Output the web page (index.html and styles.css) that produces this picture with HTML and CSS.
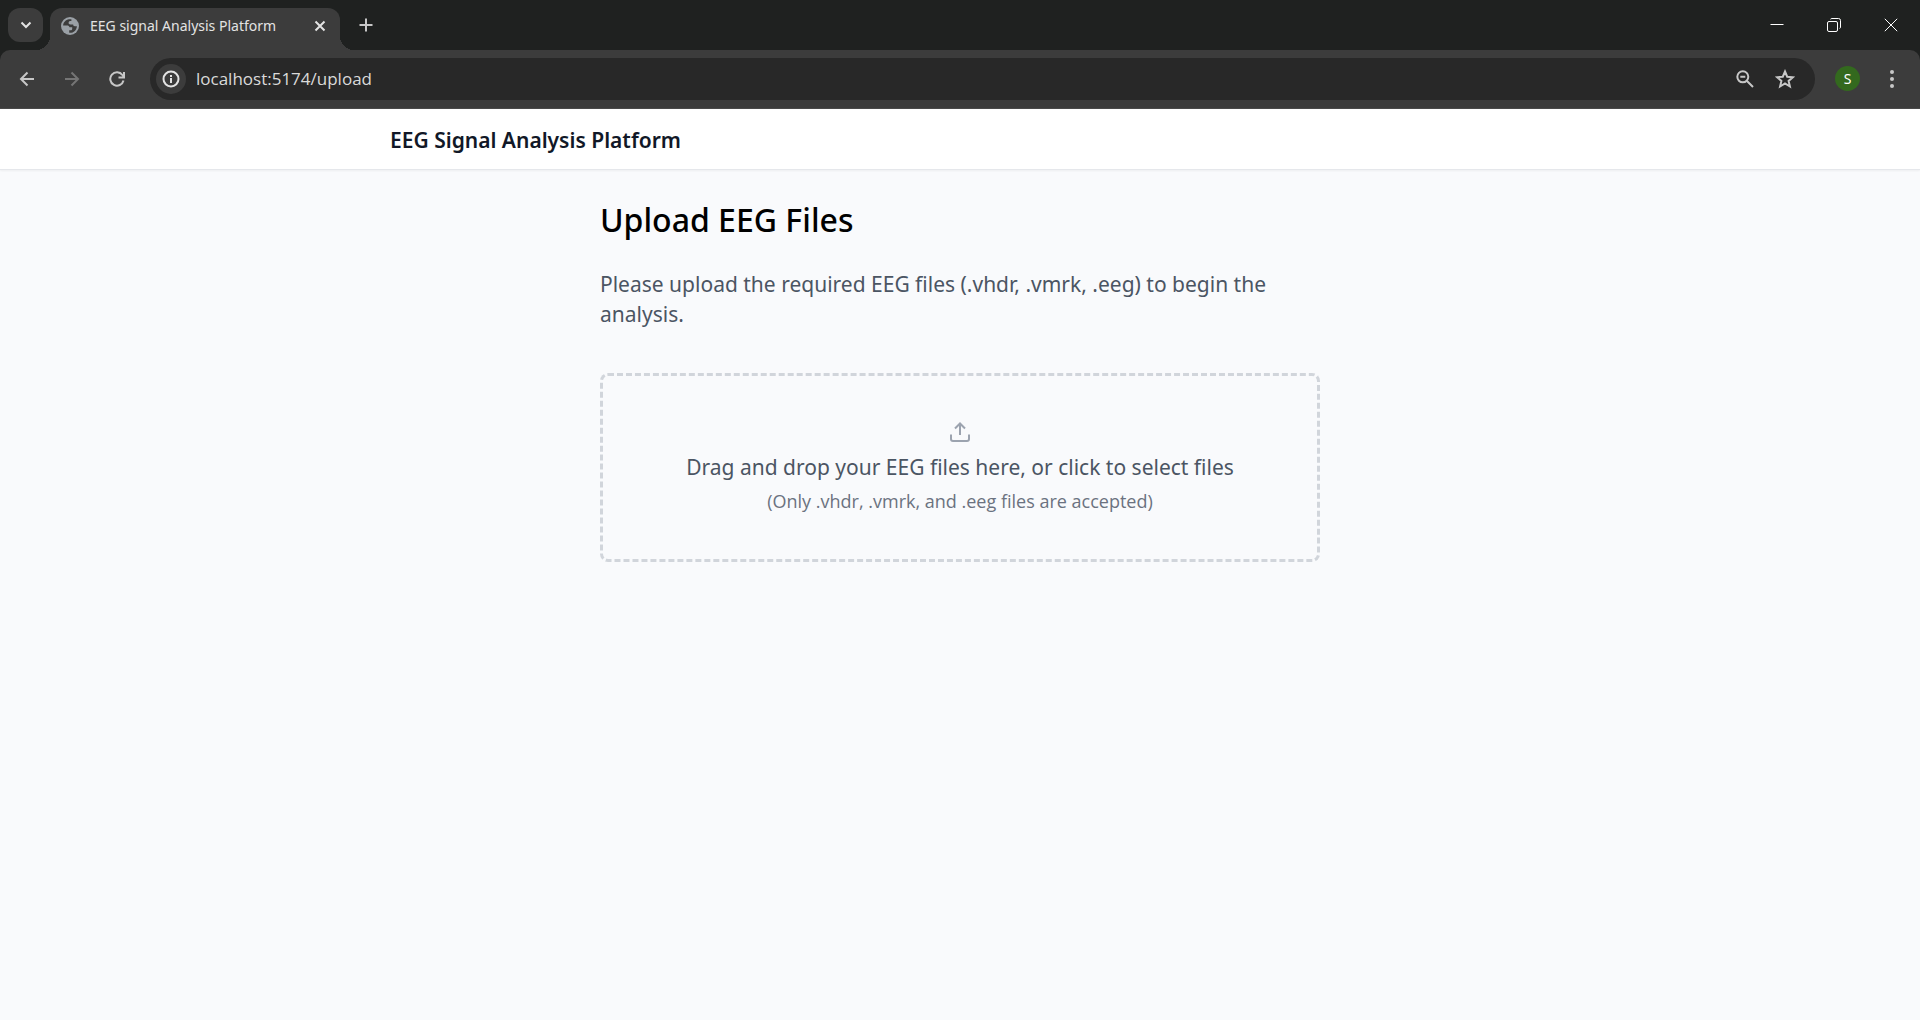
FILE: index.html
```html
<!DOCTYPE html>
<html lang="en">
<head>
<meta charset="utf-8">
<meta name="viewport" content="width=device-width, initial-scale=1">
<title>EEG signal Analysis Platform</title>
<link rel="stylesheet" href="styles.css">
</head>
<body>
<div class="browser">
  <div class="tabstrip">
    <button class="tab-search" aria-label="Search tabs">
      <svg width="12" height="8" viewBox="0 0 12 8"><path d="M1.5 1.5 6 6l4.500-4.500"/></svg>
    </button>
    <div class="tab">
      <svg class="favicon" width="18" height="18" viewBox="0 0 18 18"><circle cx="9" cy="9" r="9" fill="#9aa0a6"/><path fill="#3c3c3c" d="M8 2.200C4.800 2.700 2.200 5.300 2.100 8.600H6c1.500 0 2.200.6 2.500 1.700h2.700v1.500c0 1-.6 1.500-1.700 1.500H8.200v2.500c4 .5 7.600-2.600 7.700-6.600h-2c-1.300 0-1.700-.7-1.700-1.700H9.500c-1.400 0-1.900-.7-1.900-1.700 0-1.200.8-1.700 1.900-1.700h.9V2.200z"/></svg>
      <span class="tab-title">EEG signal Analysis Platform</span>
      <button class="tab-close" aria-label="Close tab">
        <svg width="12" height="12" viewBox="0 0 12 12"><path d="m1.500 1.500 9 9m0-9-9 9"/></svg>
      </button>
    </div>
    <button class="new-tab" aria-label="New tab">
      <svg width="14" height="14" viewBox="0 0 14 14"><path d="M7 .5v13M.5 7h13"/></svg>
    </button>
    <div class="window-controls">
      <button aria-label="Minimize"><svg width="14" height="14" viewBox="0 0 14 14"><path d="M.5 6.500h13"/></svg></button>
      <button aria-label="Restore"><svg width="14" height="14" viewBox="0 0 14 14"><rect x=".5" y="3.500" width="10" height="10" rx="1.500"/><path d="M3.500 1.200Q4 .5 5 .5h6.500q2 0 2 2V9q0 1-.8 1.500"/></svg></button>
      <button aria-label="Close window"><svg width="14" height="14" viewBox="0 0 14 14"><path d="m.8.800 12.400 12.400m0-12.400L.8 13.200"/></svg></button>
    </div>
  </div>
  <div class="toolbar">
    <div class="nav">
      <button aria-label="Back"><svg width="16" height="16" viewBox="0 0 16 16"><path d="M15 8H2m6.500-6.500L2 8l6.500 6.500"/></svg></button>
      <button aria-label="Forward" disabled><svg width="16" height="16" viewBox="0 0 16 16"><path d="M1 8h13M7.500 1.500 14 8l-6.500 6.500"/></svg></button>
      <button aria-label="Reload"><svg width="16" height="16" viewBox="0 0 16 16"><path d="M14.500 9.500A6.700 6.700 0 1 1 13.400 4L15 6M15 1v5.500H9.500"/></svg></button>
    </div>
    <div class="omnibox">
      <button class="site-info" aria-label="View site information">
        <svg width="18" height="18" viewBox="0 0 18 18"><circle cx="9" cy="9" r="7.500"/><path d="M9 8v5M9 5v2"/></svg>
      </button>
      <input class="address" type="text" aria-label="Address" value="localhost:5174/upload">
      <button class="omni-action" aria-label="Zoom"><svg width="18" height="18" viewBox="0 0 18 18"><circle cx="6.800" cy="6.800" r="5.500"/><path d="m11 11 6 6M4.300 6.800h5"/></svg></button>
      <button class="omni-action" aria-label="Bookmark this tab"><svg width="20" height="20" viewBox="0 0 20 20"><path d="m10 2.500 2.200 5.200 5.700.5-4.300 3.700 1.300 5.600-4.900-3-4.900 3 1.300-5.600-4.300-3.700 5.700-.5z"/></svg></button>
    </div>
    <button class="avatar" aria-label="Profile">S</button>
    <button class="menu" aria-label="Menu"><svg width="4" height="18" viewBox="0 0 4 18"><circle cx="2" cy="2" r="2"/><circle cx="2" cy="9" r="2"/><circle cx="2" cy="16" r="2"/></svg></button>
  </div>
</div>

<header class="site-header">
  <div class="site-header-inner">EEG Signal Analysis Platform</div>
</header>

<main class="upload">
  <h1>Upload EEG Files</h1>
  <p class="intro">Please upload the required EEG files (.vhdr, .vmrk, .eeg) to begin the analysis.</p>
  <label class="dropzone">
    <input class="file-input" type="file" accept=".vhdr,.vmrk,.eeg" multiple>
    <svg class="upload-icon" width="20" height="20" viewBox="0 0 20 20"><path d="M10 13V1.500M5 6.500l5-5 5 5M1 12.500V17q0 2 2 2h14q2 0 2-2v-4.500"/></svg>
    <span class="prompt">Drag and drop your EEG files here, or click to select files</span>
    <span class="hint">(Only .vhdr, .vmrk, and .eeg files are accepted)</span>
  </label>
</main>
</body>
</html>
```

FILE: styles.css
```css
* {
  box-sizing: border-box;
}

body {
  margin: 0;
  min-height: 100vh;
  background: #f9fafc;
  color: #000;
  font-family: "Noto Sans", "Open Sans", sans-serif;
}

button {
  display: flex;
  align-items: center;
  justify-content: center;
  flex: none;
  padding: 0;
  border: 0;
  background: transparent;
  color: #c7c7c7;
  font-family: inherit;
}

svg {
  display: block;
  flex: none;
  fill: none;
  stroke: currentColor;
  stroke-width: 2;
}

/* Browser window */
.browser {
  background: #1f2120;
}

.tabstrip {
  display: flex;
  height: 50px;
  padding-left: 8px;
}

.tab-search {
  width: 35px;
  height: 34px;
  margin: 8px 7px 0 0;
  border-radius: 12px;
  background: #3c3c3c;
  color: #e3e3e3;
}

.tab {
  position: relative;
  display: flex;
  align-items: center;
  width: 290px;
  margin-top: 8px;
  padding: 0 11px 7px;
  border-radius: 12px 12px 0 0;
  background: #3c3c3c;
}

.tab::before,
.tab::after {
  content: "";
  position: absolute;
  bottom: 0;
  width: 14px;
  height: 14px;
}

.tab::before {
  right: 100%;
  background: radial-gradient(circle at 0 0, transparent 14px, #3c3c3c 14px);
}

.tab::after {
  left: 100%;
  background: radial-gradient(circle at 100% 0, transparent 14px, #3c3c3c 14px);
}

.favicon {
  stroke: none;
}

.tab-title {
  flex: 1;
  margin-left: 11px;
  color: #e3e3e3;
  font-size: 14px;
  line-height: 20px;
  white-space: nowrap;
}

.tab-close {
  width: 18px;
  height: 18px;
  color: #e3e3e3;
}

.new-tab {
  width: 34px;
  height: 34px;
  margin: 8px 0 0 9px;
}

.window-controls {
  display: flex;
  margin: 0 1px 0 auto;
}

.window-controls button {
  width: 57px;
  height: 49px;
  color: #fff;
}

.window-controls svg {
  stroke-width: 1;
}

.toolbar {
  display: flex;
  align-items: center;
  height: 59px;
  padding: 0 10px 1px 9px;
  border-bottom: 1px solid #4a4a4a;
  border-radius: 10px 10px 0 0;
  background: #3c3c3c;
}

.nav {
  display: flex;
  gap: 10px;
  margin-right: 16px;
}

.nav button {
  width: 35px;
  height: 35px;
}

.nav button:disabled {
  color: #757575;
}

.omnibox {
  display: flex;
  align-items: center;
  flex: 1;
  height: 42px;
  padding: 0 18px 0 6px;
  border-radius: 21px;
  background: #282828;
}

.site-info {
  width: 30px;
  height: 30px;
  border-radius: 50%;
  background: #3c3c3c;
  color: #e3e3e3;
}

.address {
  flex: 1;
  min-width: 0;
  margin-left: 10px;
  padding: 0;
  border: 0;
  outline: 0;
  background: transparent;
  color: #dadada;
  font: 17px/24px "Open Sans", "Noto Sans", sans-serif;
}

.omni-action {
  width: 24px;
  height: 24px;
  margin-left: 16px;
}

.avatar {
  width: 25px;
  height: 25px;
  margin-left: 20px;
  border-radius: 50%;
  background: #33691e;
  color: #fff;
  font-size: 14px;
}

.menu {
  width: 24px;
  height: 34px;
  margin: 0 6px 0 20px;
}

.menu svg {
  fill: currentColor;
  stroke: none;
}

/* Page */
.site-header {
  border-bottom: 1px solid #e5e7eb;
  background: #fff;
  box-shadow: 0 1px 2px rgba(0, 0, 0, 0.05);
}

.site-header-inner {
  max-width: 1200px;
  margin: 0 auto;
  padding: 16px 30px 14px;
  color: #111827;
  font-size: 21px;
  font-weight: 600;
  line-height: 30px;
}

.upload {
  max-width: 760px;
  margin: 0 auto;
  padding: 30px 20px;
}

h1 {
  margin: 0 0 29px;
  font-size: 32px;
  font-weight: 500;
  line-height: 40px;
}

.intro {
  margin: 0 0 44px;
  color: #4b5563;
  font-size: 21px;
  line-height: 30px;
}

.dropzone {
  display: flex;
  flex-direction: column;
  align-items: center;
  padding: 46px 40px 44px;
  border: 3px dashed #d1d5db;
  border-radius: 8px;
  text-align: center;
  cursor: pointer;
}

.file-input {
  position: absolute;
  width: 1px;
  height: 1px;
  opacity: 0;
}

.upload-icon {
  color: #9ca3af;
}

.prompt {
  margin-top: 10px;
  color: #4b5563;
  font-size: 21px;
  line-height: 30px;
}

.hint {
  margin-top: 5px;
  color: #6b7280;
  font-family: "Open Sans", "Noto Sans", sans-serif;
  font-size: 18px;
  line-height: 28px;
}
```
